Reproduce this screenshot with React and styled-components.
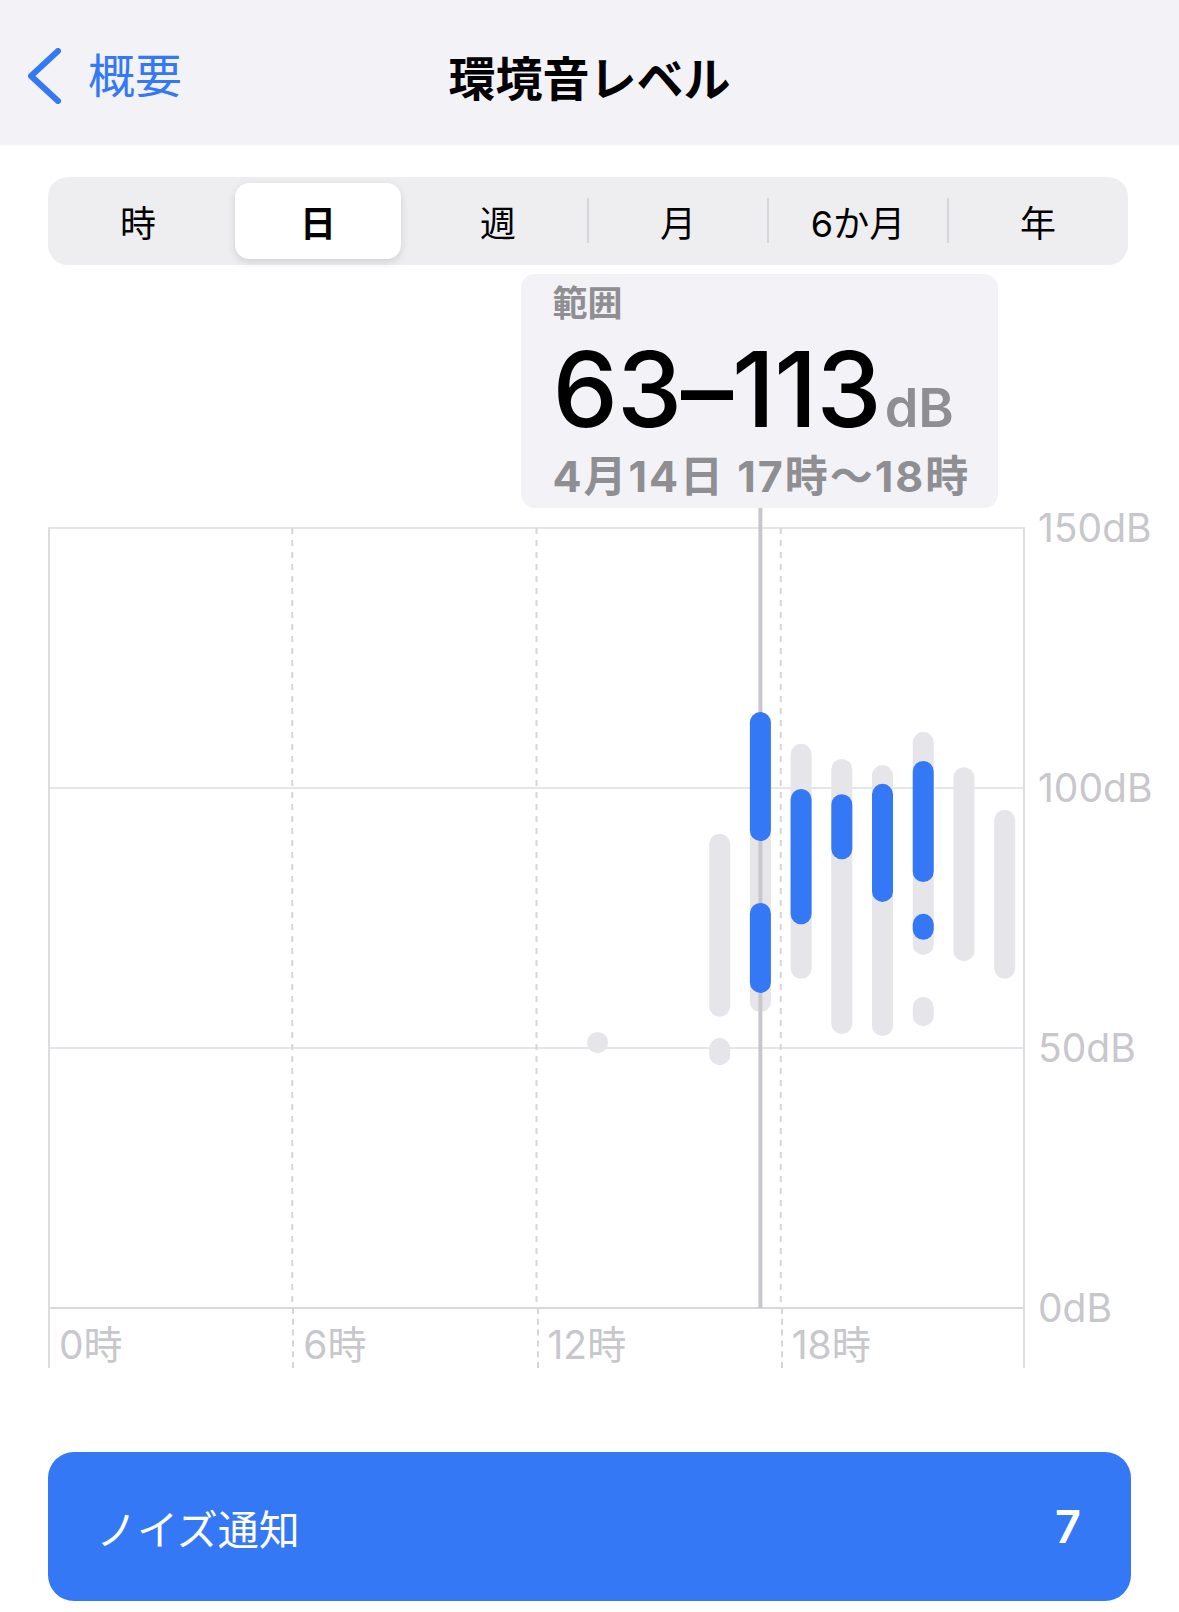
import React from 'react';
import styled, { createGlobalStyle, css } from 'styled-components';

const GlobalStyle = createGlobalStyle`
  html, body {
    margin: 0;
    padding: 0;
    background: #ffffff;
  }
  body {
    font-family: Inter, "Noto Sans CJK JP", sans-serif;
    -webkit-font-smoothing: antialiased;
  }
`;

const BLUE = '#3478f6';
const GREY_BAR = '#e5e5ea';
const LABEL = '#c7c7cc';

// chart geometry
const PLOT_W = 977;
const PLOT_H = 780;
const HOUR_W = PLOT_W / 24;
const BAR_W = 21;
const dbToY = (db) => ((150 - db) / 150) * PLOT_H;

// hourly ranges in dB: grey = all samples, blue = loud episodes
const hours = [
  { h: 13, grey: [[53.1, 49.0]], blue: [] },
  { h: 16, grey: [[91.2, 56.0], [51.9, 46.7]], blue: [] },
  { h: 17, grey: [[114.6, 56.9]], blue: [[114.6, 89.8], [77.9, 60.6]] },
  { h: 18, grey: [[108.5, 63.3]], blue: [[99.8, 73.8]] },
  { h: 19, grey: [[105.6, 52.7]], blue: [[98.8, 86.3]] },
  { h: 20, grey: [[104.4, 52.3]], blue: [[100.8, 78.1]] },
  { h: 21, grey: [[110.8, 67.9], [59.8, 54.2]], blue: [[105.2, 81.9], [75.8, 70.8]] },
  { h: 22, grey: [[104.0, 66.7]], blue: [] },
  { h: 23, grey: [[95.8, 63.3]], blue: [] },
];

const SELECTED_HOUR = 17;
const segments = ['時', '日', '週', '月', '6か月', '年'];
const ACTIVE_SEGMENT = 1;

const Page = styled.div`
  width: 1179px;
  min-height: 1612px;
  background: #ffffff;
`;

const NavBar = styled.header`
  height: 145px;
  box-sizing: border-box;
  padding-top: 6px;
  background: #f2f2f7;
  display: grid;
  grid-template-columns: 1fr auto 1fr;
  align-items: center;
`;

const BackButton = styled.button`
  justify-self: start;
  display: flex;
  align-items: center;
  gap: 26px;
  padding: 0 0 0 28px;
  border: 0;
  background: none;
  color: ${BLUE};
  font-family: inherit;
  font-size: 47px;
  line-height: 1;
`;

const NavTitle = styled.h1`
  margin: 0;
  font-size: 47px;
  font-weight: 700;
  color: #000000;
`;

const Segmented = styled.div`
  margin: 32px 51px 0 48px;
  height: 88px;
  border-radius: 20px;
  background: #eeeef0;
  display: grid;
  grid-template-columns: repeat(6, 1fr);
`;

const Segment = styled.div`
  position: relative;
  display: flex;
  align-items: center;
  justify-content: center;
  font-size: 36px;
  font-weight: 400;
  color: #000000;

  ${p => p.$active && css`
    margin: 6px 7px;
    border-radius: 14px;
    background: #ffffff;
    font-weight: 700;
    box-shadow: 0 3px 8px rgba(0, 0, 0, 0.12), 0 0 1px rgba(0, 0, 0, 0.06);
  `}

  ${p => p.$divider && css`
    &::before {
      content: '';
      position: absolute;
      left: -1px;
      top: 21px;
      bottom: 22px;
      width: 2px;
      background: #d6d6da;
    }
  `}
`;

const Chart = styled.section`
  margin-left: 48px;
  display: grid;
  grid-template-columns: ${PLOT_W}px 1fr;
  grid-template-rows: 263px ${PLOT_H}px 60px;
`;

const TooltipZone = styled.div`
  grid-column: 1 / 3;
  padding-top: 9px;
`;

const RangeCard = styled.div`
  width: 477px;
  height: 234px;
  box-sizing: border-box;
  padding: 9px 0 0 31px;
  border-radius: 14px;
  background: #f2f2f7;
`;

const RangeLabel = styled.div`
  font-size: 35px;
  line-height: 40px;
  font-weight: 700;
  color: #8e8e93;
`;

const RangeValue = styled.div`
  margin-top: 16px;
  height: 100px;
  font-size: 104px;
  line-height: 100px;
  font-weight: 500;
  letter-spacing: -1px;
  color: #000000;
  white-space: nowrap;
`;

const Unit = styled.span`
  margin-left: 4px;
  font-size: 54px;
  font-weight: 600;
  letter-spacing: 0;
  color: #8e8e93;
`;

const RangeDate = styled.div`
  margin-top: 12px;
  font-size: 43px;
  line-height: 50px;
  font-weight: 700;
  letter-spacing: 2px;
  color: #8e8e93;
  white-space: nowrap;
`;

const Plot = styled.svg`
  display: block;
  overflow: visible;
`;

const YAxis = styled.div`
  margin: -22px 0;
  padding-left: 13px;
  display: flex;
  flex-direction: column;
  justify-content: space-between;
`;

const AxisLabel = styled.span`
  font-size: 39px;
  line-height: 44px;
  color: ${LABEL};
  white-space: nowrap;
`;

const XAxis = styled.div`
  display: grid;
  grid-template-columns: repeat(4, 1fr);
`;

const XCell = styled.div`
  padding: 15px 0 0 9px;
  border-left: 2px dashed #d6d6da;
  ${p => p.$first && css`
    border-left: 2px solid #dcdce0;
  `}
  ${p => p.$last && css`
    border-right: 2px solid #dcdce0;
  `}
`;

const NoiseButton = styled.button`
  margin: 84px 48px 0 48px;
  width: 1083px;
  height: 149px;
  box-sizing: border-box;
  padding: 0 50px 0 48px;
  border: 0;
  border-radius: 26px;
  background: ${BLUE};
  display: flex;
  align-items: center;
  justify-content: space-between;
  font-family: inherit;
  color: #ffffff;
`;

const ButtonLabel = styled.span`
  font-size: 41px;
  font-weight: 400;
`;

const ButtonCount = styled.span`
  font-size: 45px;
  font-weight: 600;
`;

const Chevron = () => (
  <svg width="34" height="56" viewBox="0 0 34 56">
    <path d="M30 3 L3 28 L30 53" fill="none" stroke={BLUE} strokeWidth="6" strokeLinecap="round" strokeLinejoin="round" />
  </svg>
);

const Bar = ({ h, range, color }) => {
  const top = dbToY(range[0]);
  const bottom = dbToY(range[1]);
  const cx = (h + 0.5) * HOUR_W;
  return (
    <rect x={cx - BAR_W / 2} y={top} width={BAR_W} height={bottom - top} rx={BAR_W / 2} fill={color} />
  );
};

const LevelPlot = () => {
  const selX = (SELECTED_HOUR + 0.5) * HOUR_W;
  return (
    <Plot width={PLOT_W} height={PLOT_H} viewBox={`0 0 ${PLOT_W} ${PLOT_H}`}>
      {[0, 1, 2].map(i => (
        <line key={i} x1="0" x2={PLOT_W} y1={i * 260} y2={i * 260} stroke="#e5e5ea" strokeWidth="2" />
      ))}
      <line x1="0" x2={PLOT_W} y1={PLOT_H} y2={PLOT_H} stroke="#d8d8dc" strokeWidth="2" />
      <line x1="1" x2="1" y1="0" y2={PLOT_H} stroke="#dcdce0" strokeWidth="2" />
      <line x1={PLOT_W - 1} x2={PLOT_W - 1} y1="0" y2={PLOT_H} stroke="#dcdce0" strokeWidth="2" />
      {[1, 2, 3].map(i => (
        <line key={i} x1={i * HOUR_W * 6} x2={i * HOUR_W * 6} y1="0" y2={PLOT_H} stroke="#d6d6da" strokeWidth="2" strokeDasharray="6 6" />
      ))}
      {hours.map(d => d.grey.map((r, i) => <Bar key={`g${d.h}-${i}`} h={d.h} range={r} color={GREY_BAR} />))}
      <line x1={selX} x2={selX} y1="-20" y2={PLOT_H} stroke="#c7c7cc" strokeWidth="4" />
      {hours.map(d => d.blue.map((r, i) => <Bar key={`b${d.h}-${i}`} h={d.h} range={r} color={BLUE} />))}
    </Plot>
  );
};

export default function App() {
  const cardLeft = (SELECTED_HOUR + 0.5) * HOUR_W - 239;
  return (
    <Page>
      <GlobalStyle />
      <NavBar>
        <BackButton>
          <Chevron />
          概要
        </BackButton>
        <NavTitle>環境音レベル</NavTitle>
        <div />
      </NavBar>

      <Segmented>
        {segments.map((s, i) => (
          <Segment
            key={s}
            $active={i === ACTIVE_SEGMENT}
            $divider={i > ACTIVE_SEGMENT + 1}
          >
            {s}
          </Segment>
        ))}
      </Segmented>

      <Chart>
        <TooltipZone>
          <RangeCard style={{ marginLeft: cardLeft }}>
            <RangeLabel>範囲</RangeLabel>
            <RangeValue>
              63–113<Unit>dB</Unit>
            </RangeValue>
            <RangeDate>4月14日 17時〜18時</RangeDate>
          </RangeCard>
        </TooltipZone>

        <LevelPlot />

        <YAxis>
          <AxisLabel>150dB</AxisLabel>
          <AxisLabel>100dB</AxisLabel>
          <AxisLabel>50dB</AxisLabel>
          <AxisLabel>0dB</AxisLabel>
        </YAxis>

        <XAxis>
          <XCell $first><AxisLabel>0時</AxisLabel></XCell>
          <XCell><AxisLabel>6時</AxisLabel></XCell>
          <XCell><AxisLabel>12時</AxisLabel></XCell>
          <XCell $last><AxisLabel>18時</AxisLabel></XCell>
        </XAxis>
      </Chart>

      <NoiseButton>
        <ButtonLabel>ノイズ通知</ButtonLabel>
        <ButtonCount>7</ButtonCount>
      </NoiseButton>
    </Page>
  );
}
